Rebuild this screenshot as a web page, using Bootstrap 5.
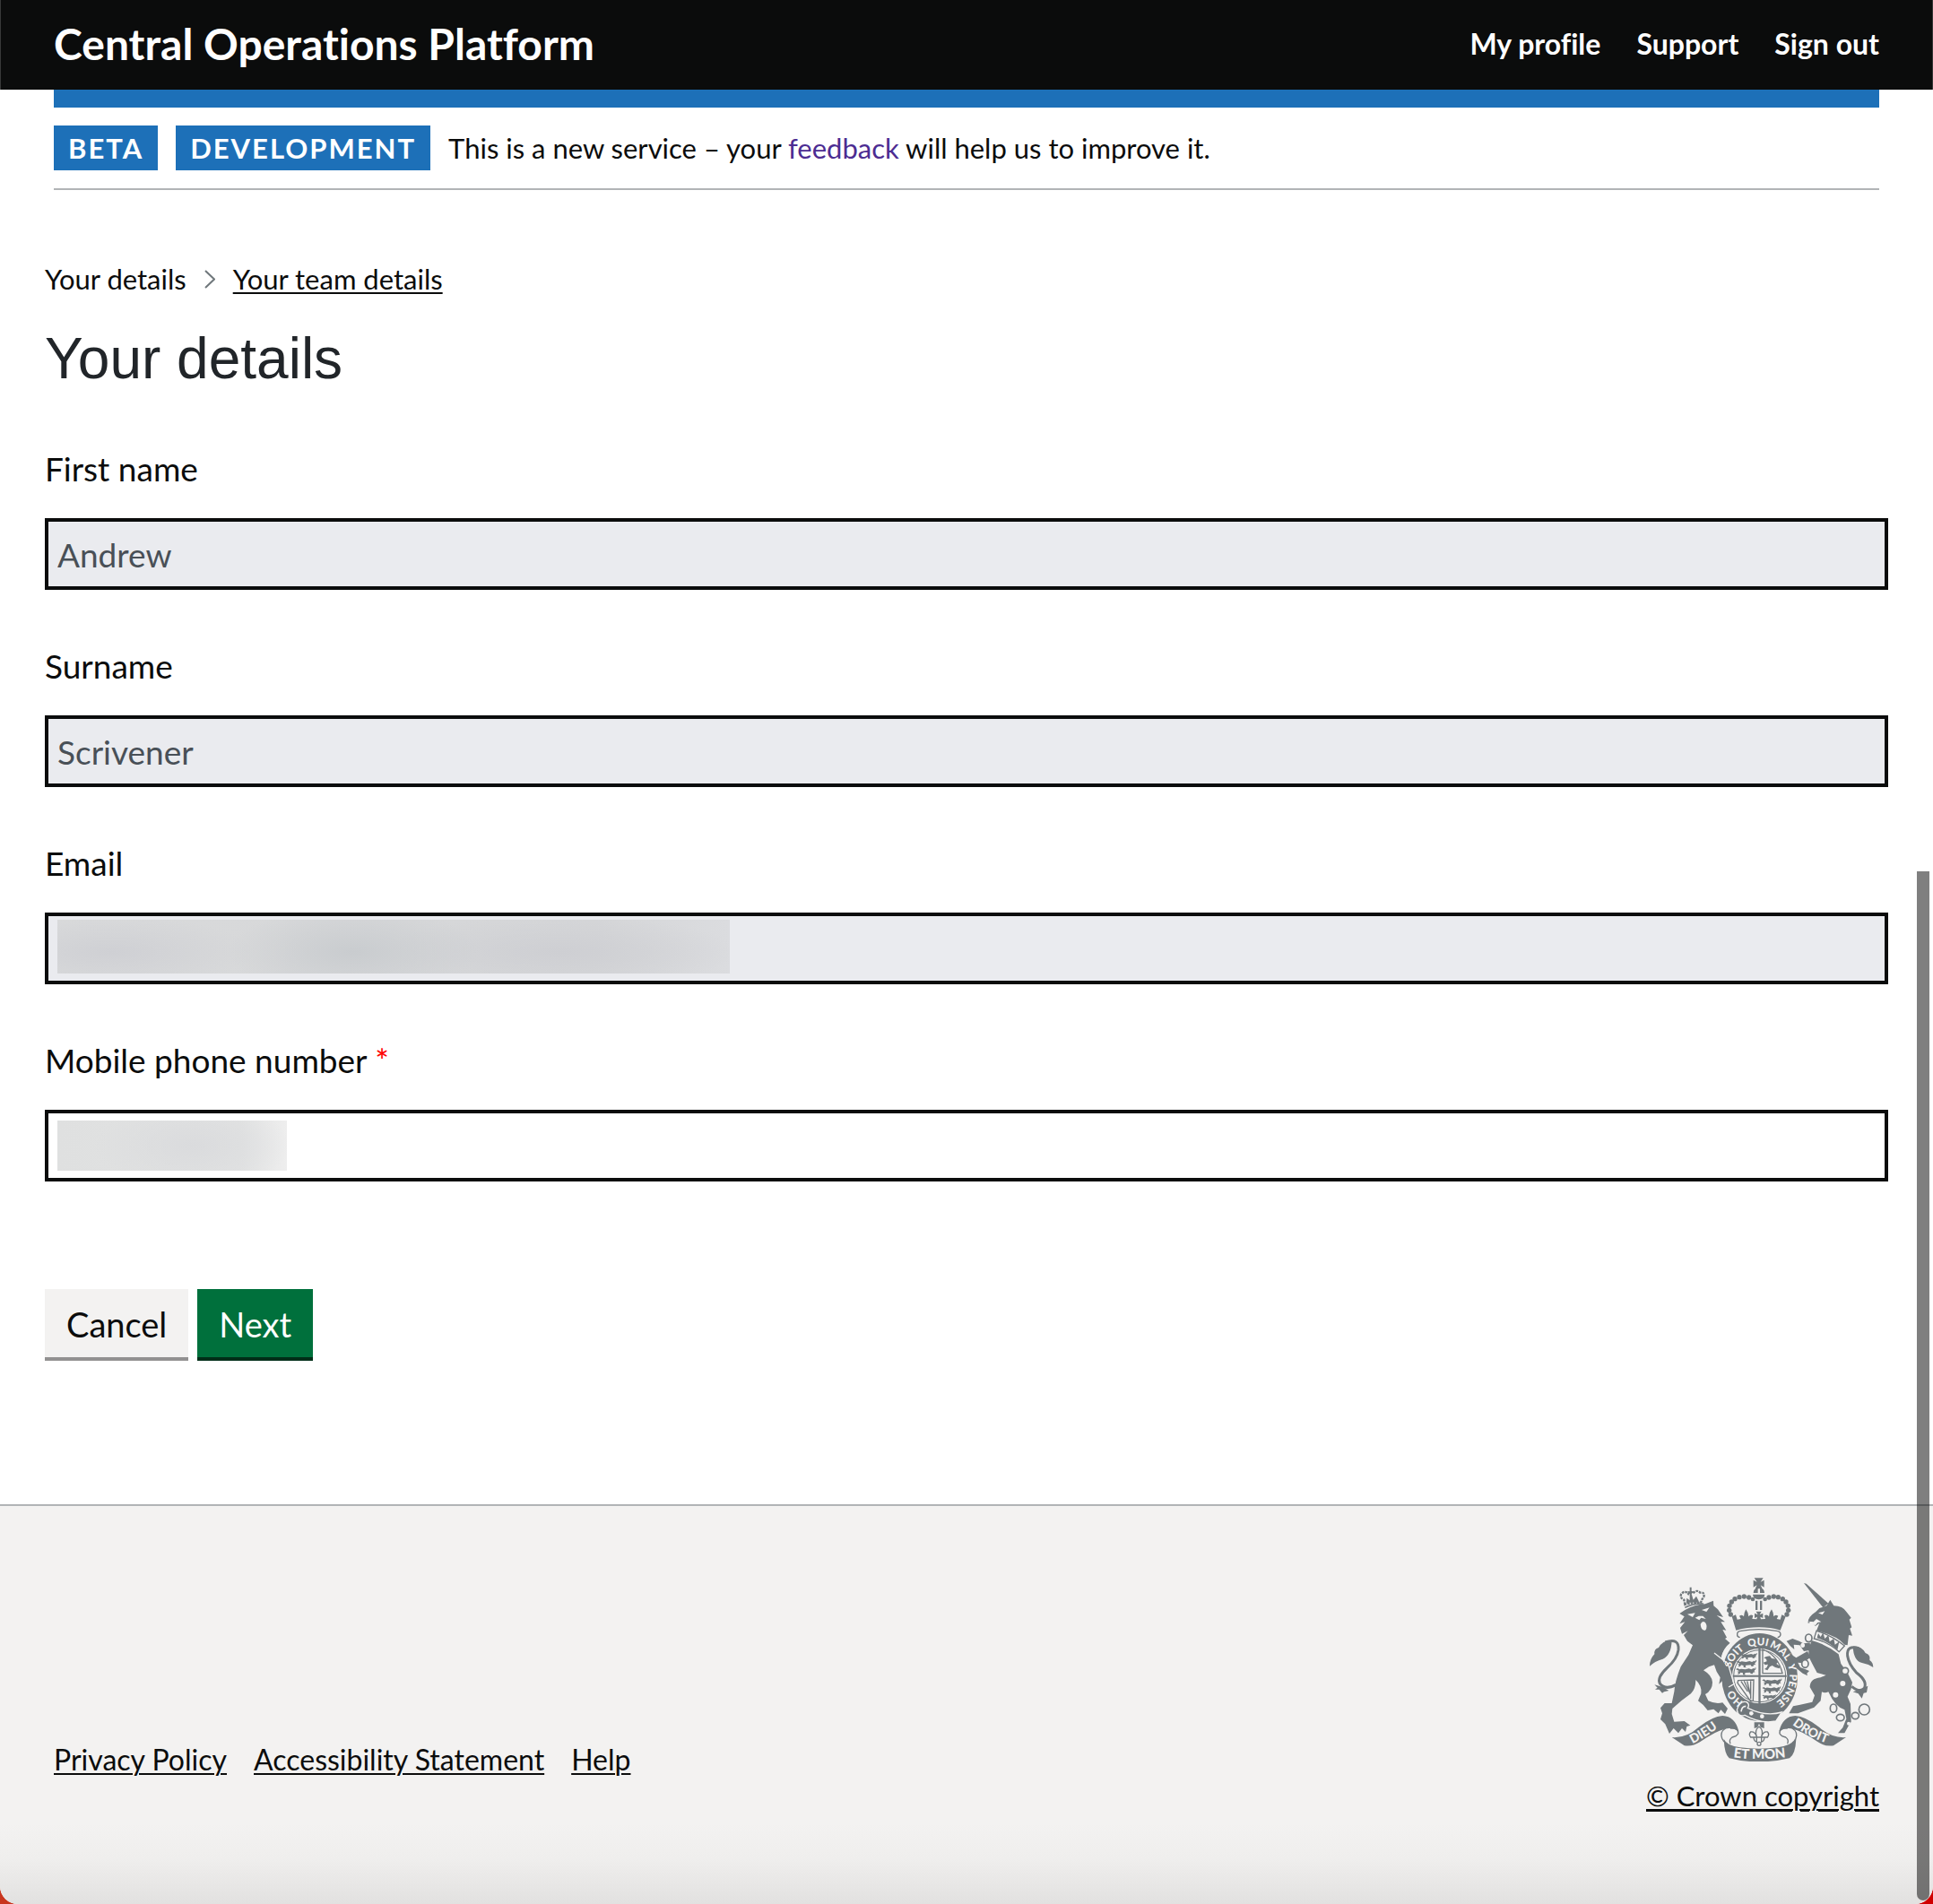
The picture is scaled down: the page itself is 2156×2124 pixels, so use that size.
<!DOCTYPE html>
<html lang="en">
<head>
<meta charset="utf-8">
<meta name="viewport" content="width=device-width, initial-scale=1">
<title>Your details - Central Operations Platform</title>
<link href="https://cdn.jsdelivr.net/npm/bootstrap@5.3.0/dist/css/bootstrap.min.css" rel="stylesheet">
<style>
  html { background: linear-gradient(90deg, #c8361e 50%, #d00000 50%); }
  body { background: transparent; color: #0b0c0c; font-family: Lato, sans-serif; font-size: 31px; line-height: 40px; font-variant-ligatures: none; }
  a { color: inherit; text-decoration-thickness: 2px; text-underline-offset: 3px; }
  .app-shell { background: #fff; border-radius: 0 0 20px 20px; overflow: hidden; }
  .app-header { background: #0b0c0c; color: #fff; min-height: 100px; padding-bottom: 2px; box-shadow: inset 1px 0 #383939, inset -1px 0 #383939; }
  .app-gutter { padding-left: 60px; padding-right: 60px; }
  .app-title { font-size: 48px; line-height: 60px; }
  .app-links { gap: 40px; font-size: 32px; }
  .accent-bar { height: 20px; background: #1d70b8; }
  .phase-row { gap: 20px; padding: 20px 0; border-bottom: 2px solid #b1b4b6; }
  .phase-tag { background: #1d70b8; color: #fff; padding: 5px 16px; letter-spacing: 2px; }
  .phase-row a { color: #4c2c92; }
  .app-main { padding: 79px 50px 160px; }
  .app-crumbs { gap: 20px; margin-bottom: 31px; }
  .app-heading { font-family: "Liberation Sans", Arial, sans-serif; font-size: 64px; line-height: 76px; font-weight: 400; color: #212529; margin-bottom: 60px; }
  .field { margin-bottom: 60px; }
  .field label { font-size: 37px; line-height: 50px; margin-bottom: 30px; display: block; }
  .field .form-control { height: 80px; border: 4px solid #0b0c0c; border-radius: 0; padding: 0 10px; font-size: 37px; line-height: 50px; color: #0b0c0c; }
  .field .form-control:disabled { background: #eaebef; color: #495057; opacity: 1; }
  .required { color: #f00; }
  .redacted { left: 14px; top: 12px; width: 256px; height: 56px;
    background: radial-gradient(ellipse 110px 50px at 150px 28px, #dadbdd, transparent), linear-gradient(90deg, #dfe0e0, #e2e3e3 80%, #eeeeee); }
  .redacted-wide { top: 8px; width: 750px; height: 60px;
    background: radial-gradient(ellipse 140px 50px at 330px 36px, #c9cccf, transparent), radial-gradient(ellipse 160px 40px at 60px 36px, #cfd0d4, transparent), radial-gradient(ellipse 200px 40px at 560px 36px, #cecfd3, transparent), linear-gradient(90deg, #d9dadb, #d5d6d8 80%, #dbdcdf); }
  .app-actions { gap: 10px; padding-top: 60px; }
  .app-actions .btn { border: 0; border-bottom: 4px solid; border-radius: 0; font-size: 38px; line-height: 50px; padding: 14px 24px 12px; }
  .app-actions .btn-cancel { background: #f3f2f1; color: #0b0c0c; border-color: #929191; }
  .app-actions .btn-next { background: #00703c; color: #fff; border-color: #002d18; }
  .app-footer { border-top: 2px solid #b1b4b6; padding-top: 80px; padding-bottom: 100px; background: linear-gradient(0deg, #e2e1e0, #efeeed 50px, #f3f2f1 90px); }
  .footer-links { gap: 30px; padding-bottom: 40px; font-size: 32px; }
  .crest-link { gap: 18px; }
  .crest { width: 250px; height: 205px; margin-right: 6px; }
  .scroll-thumb { right: 4px; top: 972px; bottom: 4px; width: 14px; background: rgba(0,0,0,.5); border-radius: 0 0 7px 7px; }
</style>
<script src="https://cdn.jsdelivr.net/npm/bootstrap@5.3.0/dist/js/bootstrap.bundle.min.js"></script>
</head>
<body>
<div class="app-shell d-flex flex-column min-vh-100">
  <header>
    <div class="app-header app-gutter d-flex align-items-center justify-content-between">
      <a class="app-title fw-bold text-decoration-none" href="#">Central Operations Platform</a>
      <nav class="app-links d-flex fw-bold" aria-label="Account">
        <a class="text-decoration-none" href="#">My profile</a>
        <a class="text-decoration-none" href="#">Support</a>
        <a class="text-decoration-none" href="#">Sign out</a>
      </nav>
    </div>
    <div class="app-gutter">
      <div class="accent-bar"></div>
      <div class="phase-row d-flex align-items-center">
        <strong class="phase-tag">BETA</strong>
        <strong class="phase-tag">DEVELOPMENT</strong>
        <span>This is a new service – your <a class="text-decoration-none" href="#">feedback</a> will help us to improve it.</span>
      </div>
    </div>
  </header>

  <main class="app-main">
    <nav class="app-crumbs d-flex align-items-center" aria-label="Breadcrumb">
      <span>Your details</span>
      <svg width="12" height="22" viewBox="0 0 12 22" fill="none" stroke="#6f777b" stroke-width="2" aria-hidden="true"><path d="M1 2l10 9.500L1 21"/></svg>
      <a href="#">Your team details</a>
    </nav>
    <h1 class="app-heading">Your details</h1>
    <form>
      <div class="field">
        <label for="first">First name</label>
        <input class="form-control" id="first" type="text" value="Andrew" disabled>
      </div>
      <div class="field">
        <label for="surname">Surname</label>
        <input class="form-control" id="surname" type="text" value="Scrivener" disabled>
      </div>
      <div class="field">
        <label for="email">Email</label>
        <div class="position-relative">
          <input class="form-control" id="email" type="email" disabled>
          <div class="redacted redacted-wide position-absolute"></div>
        </div>
      </div>
      <div class="field">
        <label for="mobile">Mobile phone number <span class="required">*</span></label>
        <div class="position-relative">
          <input class="form-control" id="mobile" type="tel">
          <div class="redacted position-absolute"></div>
        </div>
      </div>
      <div class="app-actions d-flex">
        <button class="btn btn-cancel" type="button">Cancel</button>
        <button class="btn btn-next" type="button">Next</button>
      </div>
    </form>
  </main>

  <footer class="app-footer app-gutter flex-grow-1">
    <div class="d-flex justify-content-between align-items-end">
      <nav class="footer-links d-flex" aria-label="Footer">
        <a href="#">Privacy Policy</a>
        <a href="#">Accessibility Statement</a>
        <a href="#">Help</a>
      </nav>
      <a class="crest-link d-flex flex-column align-items-end" href="#">
        <svg class="crest" viewBox="60 58 750 615" fill="#70777b" aria-hidden="true">
          <defs>
            <path id="garter" d="M428 490A100 103 0 1 1 429 490"/>
            <path id="scrollL" d="M203 614Q260 585 303 549"/>
            <path id="scrollR" d="M537 549Q590 592 665 616"/>
            <path id="scrollC" d="M340 659Q425 672 530 657"/>
            <g id="passant">
              <path d="M0 3l7-3 5 4 6-2 14 2 12-3 8 3 8-4 5 3-4 6 4 4-7 1-2 5-6-1-2-4-16 1-2 5 4 3-10-1 0-6-8-2-3 5-7 1 3-5-4-4 7-1z"/>
              <path d="M60 8q8-4 6-10" fill="none" stroke="#70777b" stroke-width="3"/>
            </g>
          </defs>

          <!-- crown -->
          <path d="M410 59h30l-9 13 12-6v24l-12-7 6 12h-24l6-12-12 7v-24l12 6z"/>
          <path d="M407 109a18 18 0 0 1 15-17v17zm22-17a18 18 0 0 1 15 17h-15zM405 114h40q-1 15-20 17-19-2-20-17zM414 135h7v31h-7zm15 0h7v31h-7z"/>
          <g>
            <circle cx="405" cy="130" r="7"/><circle cx="392" cy="124" r="8"/><circle cx="376" cy="121" r="8"/><circle cx="360" cy="123" r="8"/><circle cx="345" cy="129" r="8"/><circle cx="334" cy="139" r="8"/><circle cx="327" cy="152" r="8"/><circle cx="326" cy="167" r="8"/><circle cx="331" cy="181" r="8"/>
            <circle cx="446" cy="130" r="7"/><circle cx="459" cy="124" r="8"/><circle cx="475" cy="121" r="8"/><circle cx="490" cy="123" r="8"/><circle cx="505" cy="129" r="8"/><circle cx="516" cy="139" r="8"/><circle cx="523" cy="152" r="8"/><circle cx="524" cy="167" r="8"/><circle cx="519" cy="181" r="8"/>
          </g>
          <path d="M335 188l13-6 5 16 12-2-5-10q10-6 15 2 1-14 7-24 8 10 9 24 6-9 15-3l-3 11 15 1 2-8-9 4v-16l11 5-6-11h18l-6 11 11-5v16l-9-4 2 8 15-1-3-11q9-6 15 3 1-14 9-24 6 10 7 24 5-8 15-2l-5 10 12 2 5-16 13 6-18 46q-68-20-148 0z"/>
          <path d="M362 258q-10-2-9-11 0-10 12-11 60-10 120 0 12 1 13 11 0 9-10 11" fill="#f3f2f1" stroke="#70777b" stroke-width="4"/>

          <!-- garter and shield -->
          <ellipse cx="428" cy="391" rx="127" ry="147"/>
          <circle cx="428" cy="387" r="92" fill="#f3f2f1"/>
          <circle cx="428" cy="387" r="87" fill="none" stroke="#70777b" stroke-width="3"/>
          <path d="M424 285h7v205h-7zM338 384h180v6H338z"/>
          <use href="#passant" transform="translate(362 312) scale(.85)"/><use href="#passant" transform="translate(350 336)"/><use href="#passant" transform="translate(348 361)"/>
          <use href="#passant" transform="translate(436 398) scale(.98)"/><use href="#passant" transform="translate(436 424) scale(.93)"/><use href="#passant" transform="translate(436 450) scale(.7)"/>
          <path d="M438 298v80h66q-14-60-66-80z" fill="none" stroke="#70777b" stroke-width="4"/>
          <path d="M450 322l12-2 6 8 14 2 8 10-6 6 12 8-2 8-14-4-10-6-8 4-8 12-10-4 8-6 4-10-10 2-6-8 12-4-2-8-8-4z"/>
          <path d="M356 402l52-2-2 70-8 2-44-62z" fill="none" stroke="#70777b" stroke-width="4"/>
          <path d="M366 405l22 34M376 404l20 42M386 404l12 48M398 404v60" stroke="#70777b" stroke-width="4"/>
          <g fill="#f3f2f1" font-family="Lato, sans-serif" font-weight="900" font-size="35">
            <text><textPath href="#garter" startOffset="9%">HO</textPath></text>
            <text><textPath href="#garter" startOffset="29%">SOIT</textPath></text>
            <text><textPath href="#garter" startOffset="44%">QUI</textPath></text>
            <text><textPath href="#garter" startOffset="55%">MAL</textPath></text>
            <text><textPath href="#garter" startOffset="69%">Y</textPath></text>
            <text><textPath href="#garter" startOffset="74%">PENSE</textPath></text>
          </g>
          <!-- buckle strap -->
          <path d="M352 500q10-32 32-26 12 8 4 20 60 30 114 14l-20 30q-50 10-104-20-22 8-26-18z" stroke="#f3f2f1" stroke-width="4"/>
          <path d="M366 506q2-18 16-18" fill="none" stroke="#f3f2f1" stroke-width="5"/>
          <circle cx="400" cy="512" r="7" fill="#f3f2f1"/><circle cx="436" cy="522" r="7" fill="#f3f2f1"/>

          <!-- lion -->
          <path d="M178 148l-3-16q-14-6-10-18 12-16 24-2 6-12 16-2 14-14 24-2 16-2 12 14l-8 12-2 8q-28-2-53 6z" fill="none" stroke="#70777b" stroke-width="7" stroke-dasharray="8 3"/>
          <path d="M182 144l2-18 10 8 0-22-8-8h8v-14h6v14h8l-8 8 6 20 10-12 8 16v6q-22-4-42 2z"/>
          <path d="M178 158q26-14 62-13" fill="none" stroke="#70777b" stroke-width="5"/>
          <path d="M160 178L178 166Q215 146 246 146L273 135 274 152 288 164 306 190 284 184 312 206 298 206 316 234 304 232 318 258 312 262 330 278Q304 300 299 326L320 362 328 390 338 414 326 418 320 402 310 416 304 402 292 414 296 392 284 372 276 350 258 356 240 368Q268 384 270 408 270 434 246 448L256 470Q280 482 304 476L321 496 312 514 298 500 290 512 274 498 254 502Q240 482 222 470L232 446Q236 420 214 400 214 430 198 446L166 470 136 496 134 514 142 540 176 538 196 552 184 556 180 574 168 562 156 578 140 562 126 580 112 548 96 532 102 512 96 494 110 478 134 478 142 440Q144 406 164 356L190 316 204 284 186 270 174 250 188 236 168 246 162 226 178 206 160 212 176 188Z"/>
          <path d="M186 180l26-4-8 14zM234 166l26-8-10 14zM212 192l12-6 14 0 10 10-16-4-6 8zM230 214q6-14 16-6 10 14 0 26-14 2-16-20z" fill="#f3f2f1"/>
          <path d="M276 310l46 36 20 68-18 10" fill="none" stroke="#f3f2f1" stroke-width="4"/>
          <path d="M332 276Q306 296 302 326" fill="none" stroke="#f3f2f1" stroke-width="4"/>
          <path d="M112 274Q160 258 156 300 152 330 118 360 84 392 94 412 112 436 148 416" fill="none" stroke="#70777b" stroke-width="9"/>
          <path d="M134 268Q104 266 90 292 74 296 76 314 60 330 60 354 76 338 104 330 132 318 134 268ZM76 416L104 424 124 436 108 440 102 444 92 432 78 432 86 426Z"/>

          <!-- unicorn -->
          <path d="M576 76L584 78 658 144 640 158Z"/>
          <path d="M664 132L676 152Q706 152 720 174L734 192 728 198 736 224 730 228 738 252 726 250 722 284 712 282Q684 250 618 236L628 210 614 220 604 206 590 210Q588 190 616 172L628 160 652 152Z"/>
          <path d="M590 204l18 2 10-10 16 10-12 2-8 10-12-8zM624 176l22-6-8 12z" fill="#f3f2f1"/>
          <path d="M618 236Q664 248 712 286L694 306Q656 272 610 262Z" fill="#f3f2f1" stroke="#70777b" stroke-width="4"/>
          <path d="M620 260l4-16 8 12 8-14 6 20 12-12 4 22 14-10 4 20 14-10-6 28q-30-28-68-40z"/>
          <path d="M602 268Q654 282 692 314L700 346 722 376 738 408 734 430 722 456 732 480 734 540 724 556 712 578 690 578 706 560 718 530 712 500Q680 490 658 440 646 446 636 440L632 470 610 492 556 512 526 512 540 488 560 484 604 474 612 452 596 424Q596 396 632 392L650 384 620 376 606 350 592 322 592 296Z"/>
          <path d="M518 270L538 262 560 270 574 278 596 276 600 300 576 304 562 284 542 282 544 298 530 286ZM526 310L550 326 588 304 598 324 572 344 556 342 564 358 580 364 594 370 586 378 588 386 572 378 552 362 540 336Z"/>
          <g fill="#f3f2f1" stroke="#70777b" stroke-width="5">
            <ellipse cx="592" cy="260" rx="11" ry="13"/><ellipse cx="580" cy="346" rx="11" ry="13"/><circle cx="714" cy="370" r="11"/><ellipse cx="675" cy="495" rx="11" ry="14"/><ellipse cx="698" cy="526" rx="13" ry="11"/><ellipse cx="748" cy="520" rx="12" ry="11"/><circle cx="778" cy="499" r="18"/>
          </g>
          <g fill="#f3f2f1"><ellipse cx="572" cy="284" rx="7" ry="8"/><circle cx="706" cy="412" r="9"/><circle cx="682" cy="450" r="9"/><circle cx="726" cy="546" r="6"/></g>
          <path d="M760 294Q718 282 722 320 726 348 752 376 790 404 778 428 764 444 736 422" fill="none" stroke="#70777b" stroke-width="9"/>
          <path d="M740 288Q768 286 782 310 800 316 796 334 808 342 808 358 790 346 768 342 742 334 740 288ZM790 420L786 442 776 444 770 462 758 446 740 440 764 432Z"/>

          <!-- motto scroll -->
          <path d="M134 592q48 4 90-34 46-36 80-38 42 2 54 52-22-14-46-8-30 6-84 44-24 16-52 12zM717 592q-48 4-90-34-46-36-80-38-42 2-54 52 22-14 46-8 30 6 84 44 24 16 52 12z"/>
          <path d="M314 562q-20 12-12 34 4 10 12 14M330 562q28-2 26 18-6 10-20 12-12 8-6 22M537 562q20 12 12 34-4 10-12 14M521 562q-28-2-26 18 6 10 20 12 12 8 6 22" fill="none" stroke="#70777b" stroke-width="4"/>
          <path d="M308 598q10 22 54 28 63 8 126 0 44-6 62-28-2 50-22 64-48 12-103 12t-99-12q-16-14-18-64z"/>
          <g fill="#f3f2f1" font-family="Lato, sans-serif" font-weight="900" font-size="45">
            <text font-size="42"><textPath href="#scrollL">DIEU</textPath></text>
            <text font-size="42"><textPath href="#scrollR">DROIT</textPath></text>
            <text><textPath href="#scrollC">ET MON</textPath></text>
          </g>
          <path d="M410 542h33v20l-12-4-5-12-5 12-11 4z"/>
          <g fill="none" stroke="#70777b" stroke-width="4"><path d="M426 556q16 12 8 34 6-18 20-16 8 8 0 18h-56q-8-10 0-18 14-2 20 16-8-22 8-34zM418 592v16M434 592v16M408 592q0 14 12 16M444 592q0 14-12 16"/><circle cx="426" cy="614" r="6"/></g>
        </svg>
        <span class="text-decoration-underline">© Crown copyright</span>
      </a>
    </div>
  </footer>
</div>
<div class="scroll-thumb position-fixed" aria-hidden="true"></div>
</body>
</html>
